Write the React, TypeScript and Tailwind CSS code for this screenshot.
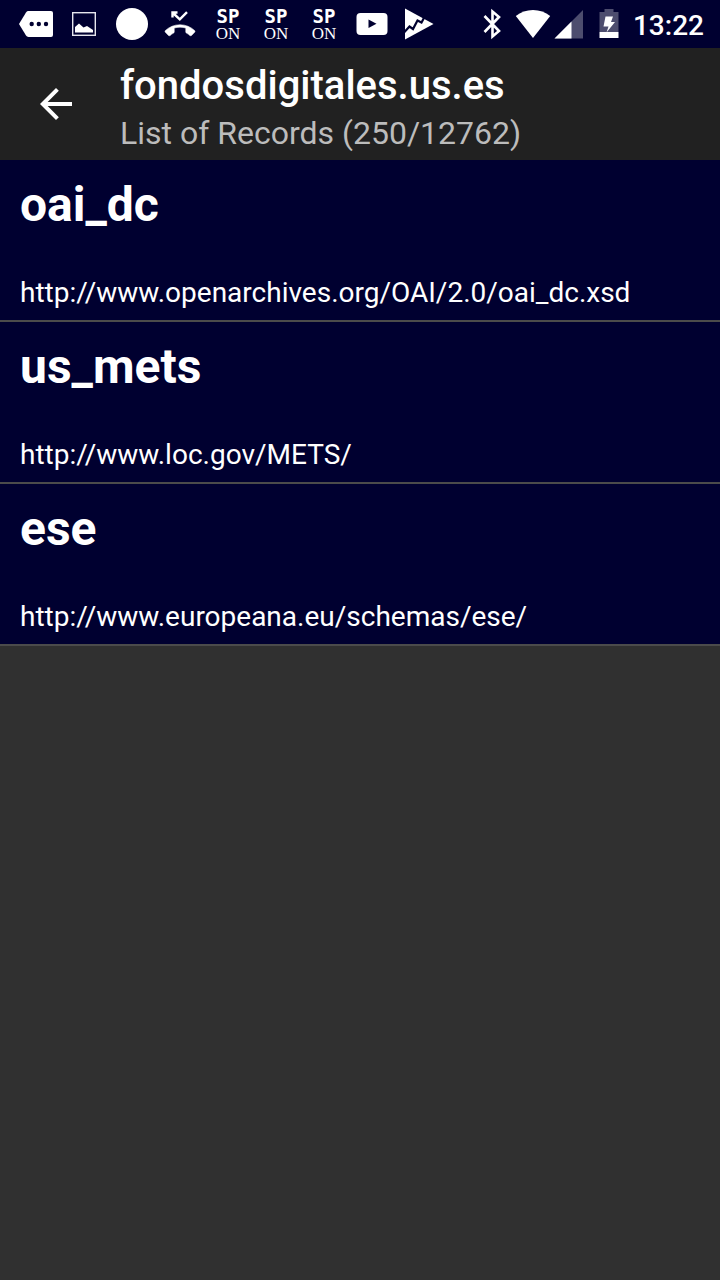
import type { ReactNode } from "react";

const records = [
  { name: "oai_dc", url: "http://www.openarchives.org/OAI/2.0/oai_dc.xsd" },
  { name: "us_mets", url: "http://www.loc.gov/METS/" },
  { name: "ese", url: "http://www.europeana.eu/schemas/ese/" },
];

function Slot({ children }: { children: ReactNode }) {
  return (
    <svg viewBox="0 0 48 48" className="size-12 shrink-0 fill-white" aria-hidden="true">
      {children}
    </svg>
  );
}

function SpOn() {
  return (
    <div className="flex h-12 w-12 shrink-0 flex-col items-center pt-2">
      <span className="font-['DejaVu_Sans_Mono',monospace] text-[19px] leading-4 font-bold">SP</span>
      <span className="pt-0.5 font-['Liberation_Serif',serif] text-[17px] leading-4">ON</span>
    </div>
  );
}

function StatusBar() {
  return (
    <div className="flex h-12 items-center bg-[#000030] pr-4 pl-3">
      <Slot>
        <path d="M16.500 11H39a2 2 0 0 1 2 2V35a2 2 0 0 1-2 2H16.500a3 3 0 0 1-2.500-1.400L7 24l7-11.600A3 3 0 0 1 16.500 11z" />
        <g className="fill-[#000030]">
          <circle cx="19.700" cy="24" r="2.200" />
          <circle cx="26.800" cy="24" r="2.200" />
          <circle cx="34" cy="24" r="2.200" />
        </g>
      </Slot>
      <Slot>
        <rect x="12.700" y="12.700" width="22.600" height="22.600" fill="none" stroke="#e6e6ee" strokeWidth="1.400" />
        <path d="M15 32.500V27l4-3.500 4.500 4 3.500-1.500 6 4v2.500z" />
      </Slot>
      <Slot>
        <circle cx="24" cy="24" r="16" />
      </Slot>
      <Slot>
        <path
          d="M16.500 17.500V12.500H21.500M17 13L23.800 19.300L31 12.200"
          fill="none"
          stroke="#fff"
          strokeWidth="2.400"
        />
        <path
          transform="translate(9 9.700) scale(1.250)"
          stroke="#fff"
          strokeWidth=".4"
          d="M23.710 16.670C20.660 13.780 16.540 12 12 12 7.460 12 3.340 13.780.29 16.670c-.18.18-.29.43-.29.71 0 .28.11.53.29.71l2.480 2.480c.18.18.43.29.71.29.27 0 .52-.11.7-.28.79-.74 1.690-1.360 2.660-1.850.33-.16.56-.5.56-.9v-3.100c1.450-.48 3-.73 4.600-.73 1.600 0 3.150.25 4.600.72v3.100c0 .39.23.74.56.9.98.49 1.870 1.120 2.660 1.850.18.18.43.28.7.28.28 0 .53-.11.71-.29l2.480-2.480c.18-.18.29-.43.29-.71 0-.28-.11-.53-.29-.71z"
        />
      </Slot>
      <SpOn />
      <SpOn />
      <SpOn />
      <Slot>
        <rect x="8.500" y="13" width="31" height="22" rx="4" />
        <path className="fill-[#000030]" d="M20.500 19.500v8.600l8-4.300z" />
      </Slot>
      <Slot>
        <path d="M9 8.500L37.500 24 9 39.500z" />
        <path
          d="M8 32.500L13.500 26.500L17 29L21.500 20.500L25.500 22.500L29 16"
          fill="none"
          stroke="#000030"
          strokeWidth="2.200"
        />
      </Slot>
      <svg viewBox="0 0 24 48" className="ml-auto h-12 w-6 shrink-0" fill="none" stroke="#fff" strokeWidth="2.600" aria-hidden="true">
        <path d="M4.500 16L19 31l-6.500 5.500v-25L19 17 4.500 32" />
      </svg>
      <svg viewBox="0 0 36 48" className="ml-[11px] h-12 w-9 shrink-0 fill-white" aria-hidden="true">
        <path d="M18 38L.8 16C5.500 12 11.500 10 18 10s12.500 2 17.200 6z" />
      </svg>
      <svg viewBox="0 0 36 48" className="h-12 w-9 shrink-0 fill-white" aria-hidden="true">
        <path fillOpacity=".3" d="M32 10v28.500H3.500z" />
        <path d="M20.500 21.500v17H3.500z" />
      </svg>
      <svg viewBox="0 0 20 48" className="ml-3 h-12 w-5 shrink-0 fill-white" aria-hidden="true">
        <path fillOpacity=".3" d="M.5 12H5.500V9H14.500V12H19.500V32H.5z" />
        <path d="M.5 32h19v6H.5zM6.500 16.500H14L12 22h4L7.500 32.500L9.500 26.500H4.500z" />
      </svg>
      <span className="ml-[14px] pt-1 text-[28px] leading-8 font-medium">13:22</span>
    </div>
  );
}

export default function App() {
  return (
    <div className="min-h-screen bg-[#303030] font-[Roboto,sans-serif] text-white">
      <StatusBar />
      <header className="flex h-28 items-center bg-[#212121]">
        <button type="button" aria-label="Back" className="flex w-28 shrink-0 justify-center">
          <svg viewBox="4 4 16 16" className="size-8 fill-white" aria-hidden="true">
            <path d="M20 11H7.830l5.590-5.590L12 4l-8 8 8 8 1.410-1.410L7.830 13H20v-2z" />
          </svg>
        </button>
        <div className="self-start pt-[14px] pl-2">
          <h1 className="text-[40px] leading-12 font-medium">fondosdigitales.us.es</h1>
          <p className="pt-[3px] text-[32px] leading-10 text-[#bcbcbc]">List of Records (250/12762)</p>
        </div>
      </header>
      <main>
        <ul>
          {records.map((record) => (
            <li key={record.name} className="border-b-2 border-[#4b4b4b] bg-[#000030] px-5 pt-[17px] pb-[11px]">
              <h2 className="text-[48px] leading-14 font-bold">{record.name}</h2>
              <p className="pt-11 text-[28px] leading-8">{record.url}</p>
            </li>
          ))}
        </ul>
      </main>
    </div>
  );
}
